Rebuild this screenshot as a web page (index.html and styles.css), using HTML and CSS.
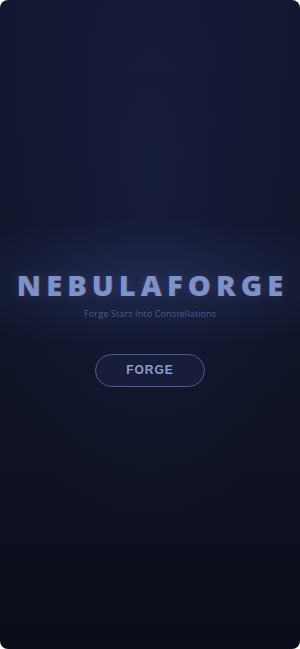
FILE: index.html
```html
<!DOCTYPE html>
<html>
<head>
  <title>NebulaForge</title>
  <link rel="stylesheet" href="styles.css">
</head>
<body>
  <div class="screen">
    <div class="hero">
      <h1 class="title">NEBULAFORGE</h1>
      <p class="tagline">Forge Stars Into Constellations</p>
      <button class="btn-forge">FORGE</button>
    </div>
  </div>
</body>
</html>
```

FILE: styles.css
```css
body {
  margin: 0;
  background-color: #fff;
  font-family: "Open Sans", "Noto Sans", sans-serif;
}

.screen {
  width: 300px;
  height: 649px;
  border-radius: 8px;
  overflow: hidden;
  display: flex;
  flex-direction: column;
  justify-content: center;
  align-items: center;
  background:
    radial-gradient(ellipse 85% 10% at 50% 43.5%, rgba(55, 72, 130, 0.3), rgba(55, 72, 130, 0) 100%),
    radial-gradient(ellipse 55% 60% at 50% 25%, rgba(28, 36, 74, 0.5), rgba(28, 36, 74, 0) 100%),
    linear-gradient(180deg, #121730 0%, #10152a 45%, #0b0e19 100%);
}

.hero {
  display: flex;
  flex-direction: column;
  align-items: center;
  margin-top: 4px;
}

.title {
  margin: 0;
  font-family: "Open Sans", sans-serif;
  font-weight: 800;
  font-size: 29px;
  letter-spacing: 5.1px;
  margin-right: -5.1px;
  color: #7e92c6;
  line-height: 36px;
  text-shadow: 1px 0 0 rgba(200, 40, 60, 0.25), -1px 0 0 rgba(40, 60, 200, 0.25), 0 0 12px rgba(110, 140, 220, 0.2);
}

.tagline {
  margin: 4px 0 0;
  font-size: 9.3px;
  color: #4b5c90;
}

.btn-forge {
  margin-top: 34px;
  width: 110px;
  height: 33px;
  border: 1px solid #4d5d8f;
  border-radius: 17px;
  background-color: #171d3a;
  color: #8d9bcb;
  font-family: "Liberation Sans", Arial, sans-serif;
  font-weight: bold;
  font-size: 12px;
  letter-spacing: 1px;
  cursor: pointer;
}
```
